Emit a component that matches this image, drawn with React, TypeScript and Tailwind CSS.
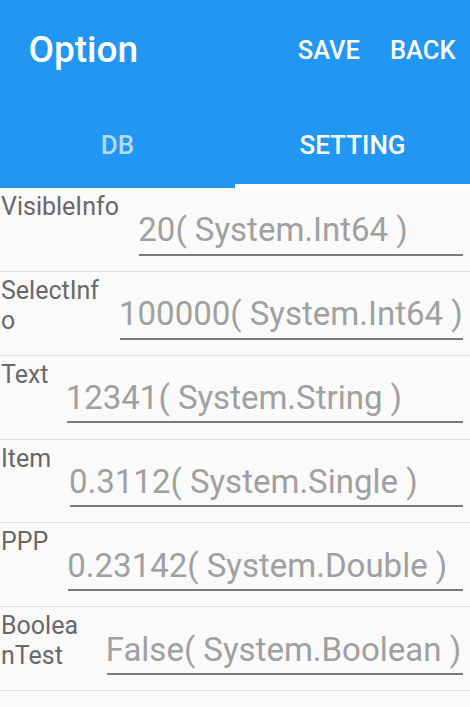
import React from "react";

type Row = { label: string; value: string; col: number; pr: number };

const rows: Row[] = [
  { label: "VisibleInfo", value: "20( System.Int64 )", col: 139.3, pr: 0 },
  { label: "SelectInfo", value: "100000( System.Int64 )", col: 120, pr: 16 },
  { label: "Text", value: "12341( System.String )", col: 66.7, pr: 0 },
  { label: "Item", value: "0.3112( System.Single )", col: 70, pr: 0 },
  { label: "PPP", value: "0.23142( System.Double )", col: 68.3, pr: 0 },
  { label: "BooleanTest", value: "False( System.Boolean )", col: 106.7, pr: 24 },
];

export default function App() {
  return (
    <div className="w-[470px] h-[707px] bg-[#fafafa] overflow-hidden [font-family:Roboto,sans-serif]">
      <div className="bg-[#2196f3] flex flex-col">
        <div className="h-[96px] flex items-start text-white font-medium">
          <div className="pl-[28.5px] pt-[27.7px] text-[37px] leading-[44px]">Option</div>
          <div className="ml-auto pt-[34.6px] text-[25.5px] leading-[30px]">SAVE</div>
          <div className="ml-[30px] mr-[14.5px] pt-[34.6px] text-[25.5px] leading-[30px]">BACK</div>
        </div>
        <div className="h-[92px] grid grid-cols-2 font-medium text-[26px] leading-[30px]">
          <div className="flex flex-col items-center">
            <div className="pt-[34px] text-[#b5dafb]">DB</div>
          </div>
          <div className="flex flex-col items-center justify-between">
            <div className="pt-[34px] text-white">SETTING</div>
            <div className="h-[4px] w-full bg-white" />
          </div>
        </div>
      </div>
      <div className="flex flex-col">
        {rows.map((r) => (
          <div key={r.label} className="h-[83.86px] box-border border-b border-[#e0e0e0] flex">
            <div
              className="shrink-0 pl-[1px] pt-[4px] text-[25px] leading-[30px] text-[#686868] break-all"
              style={{ width: r.col, paddingRight: r.pr }}
            >
              {r.label}
            </div>
            <div className="flex-1 mr-[7px] pt-[23.3px] flex flex-col">
              <div className="text-[33px] leading-[38px] text-[#a0a0a0] whitespace-nowrap -ml-[1px]">
                {r.value}
              </div>
              <div className="mt-[4.4px] h-[2px] bg-[#7a7a7a]" />
            </div>
          </div>
        ))}
      </div>
    </div>
  );
}
